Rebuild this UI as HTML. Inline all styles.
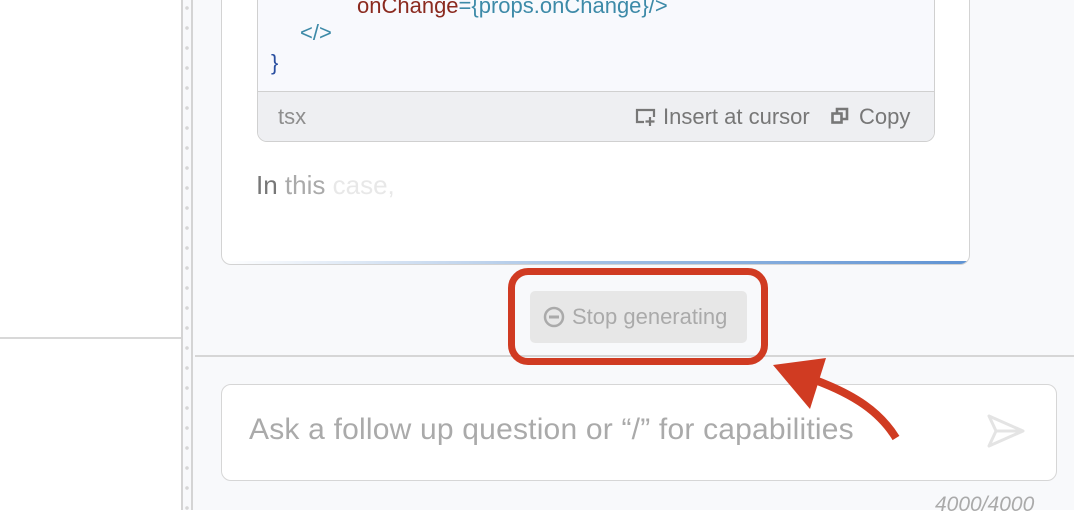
<!DOCTYPE html>
<html><head><style>
*{margin:0;padding:0;box-sizing:border-box}
body{width:1074px;height:510px;overflow:hidden;background:#fff;font-family:"Liberation Sans",sans-serif;position:relative}
.abs{position:absolute}
</style></head><body>
<div class="abs" style="left:0;top:337px;width:182px;height:2px;background:#d8d8d8"></div>
<div class="abs" style="left:181px;top:0;width:2px;height:510px;background:#d4d4d4"></div>
<div class="abs" style="left:183px;top:0;width:8px;height:510px;background:#f8f9fb;background-image:radial-gradient(circle,#d6d6d6 1.6px,transparent 2px);background-size:8px 20px;background-position:0 -2px"></div>
<div class="abs" style="left:191px;top:0;width:2px;height:510px;background:#d4d4d4"></div>
<div class="abs" style="left:193px;top:0;width:881px;height:510px;background:#f8f9fb"></div>
<!-- card -->
<div class="abs" style="left:221px;top:-20px;width:749px;height:285px;background:#fff;border:1.5px solid #d3d3d3;border-top:none;border-radius:0 0 10px 10px;overflow:hidden">
  <div class="abs" style="left:0;bottom:0;width:100%;height:3px;background:linear-gradient(90deg,rgba(100,150,210,0) 0%,rgba(100,150,210,.6) 50%,#5f93d3 100%)"></div>
</div>
<div class="abs" style="left:257px;top:-10px;width:678px;height:152px;background:#f8f9fd;border:1.5px solid #d0d0d0;border-top:none;border-radius:0 0 10px 10px;overflow:hidden;font-size:22px">
  <div class="abs" style="left:99px;top:3px;color:#8b2a1f;white-space:nowrap">onChange<span style="color:#3d8aa8">={props.onChange}/&gt;</span></div>
  <div class="abs" style="left:42px;top:30px;color:#3d8aa8">&lt;/&gt;</div>
  <div class="abs" style="left:13px;top:60px;color:#2a4fa0">}</div>
  <div class="abs" style="left:0;top:101px;width:100%;height:51px;background:#eeeff2;border-top:1.5px solid #d0d0d0;font-size:22px;color:#8e8e8e">
    <div class="abs" style="left:20px;top:12px">tsx</div>
    <svg class="abs" style="left:377px;top:15px" width="22" height="20" viewBox="0 0 22 20" fill="none" stroke="#777" stroke-width="2.2"><path d="M9 15H2V3h17v7"/><path d="M15 10v9M10.5 14.5h9"/></svg>
    <div class="abs" style="left:405px;top:12px;color:#777">Insert at cursor</div>
    <svg class="abs" style="left:572px;top:14px" width="20" height="20" viewBox="0 0 20 20" fill="none" stroke="#777" stroke-width="2.6"><rect x="2.5" y="7.5" width="9" height="9"/><path d="M7 7V3h10v10h-5"/></svg>
    <div class="abs" style="left:601px;top:12px;color:#777">Copy</div>
  </div>
</div>
<div class="abs" style="left:256px;top:170px;font-size:26px;color:#777">In <span style="color:#aaa">this</span> <span style="color:#e8e8e8">case,</span></div>
<!-- divider -->
<div class="abs" style="left:195px;top:355px;width:879px;height:2px;background:#d6d6d6"></div>
<!-- stop button -->
<div class="abs" style="left:530px;top:291px;width:217px;height:52px;background:#e7e7e7;border-radius:5px"></div>
<svg class="abs" style="left:543px;top:306px" width="22" height="22" viewBox="0 0 22 22"><circle cx="11" cy="11" r="9" fill="none" stroke="#aaa" stroke-width="2.5"/><rect x="6" y="9.5" width="10" height="3" fill="#aaa"/></svg>
<div class="abs" style="left:572px;top:304px;font-size:22px;color:#aaa">Stop generating</div>
<div class="abs" style="left:508px;top:268px;width:260px;height:97px;border:7px solid #d03b22;border-radius:20px"></div>
<!-- input -->
<div class="abs" style="left:221px;top:384px;width:836px;height:97px;background:#fff;border:1.5px solid #d6d6d6;border-radius:10px"></div>
<div class="abs" style="left:249px;top:413px;font-size:30px;letter-spacing:0.2px;color:#aaa;white-space:nowrap">Ask a follow up question or “/” for capabilities</div>
<svg class="abs" style="left:986px;top:413px" width="40" height="36" viewBox="0 0 40 36" fill="none" stroke="#e4e4e4" stroke-width="3" stroke-linejoin="round"><path d="M3 3L37 18L3 33L10 18Z"/><path d="M10 18H37"/></svg>
<div class="abs" style="left:935px;top:493px;font-size:21px;font-style:italic;color:#aaa">4000/4000</div>
<!-- arrow -->
<svg class="abs" style="left:760px;top:340px" width="150" height="130" viewBox="0 0 150 130"><path d="M136 98C120 72 95 55 55 40" fill="none" stroke="#d03b22" stroke-width="8"/><path d="M13 25L66 18L50 69Z" fill="#d03b22"/></svg>
</body></html>
